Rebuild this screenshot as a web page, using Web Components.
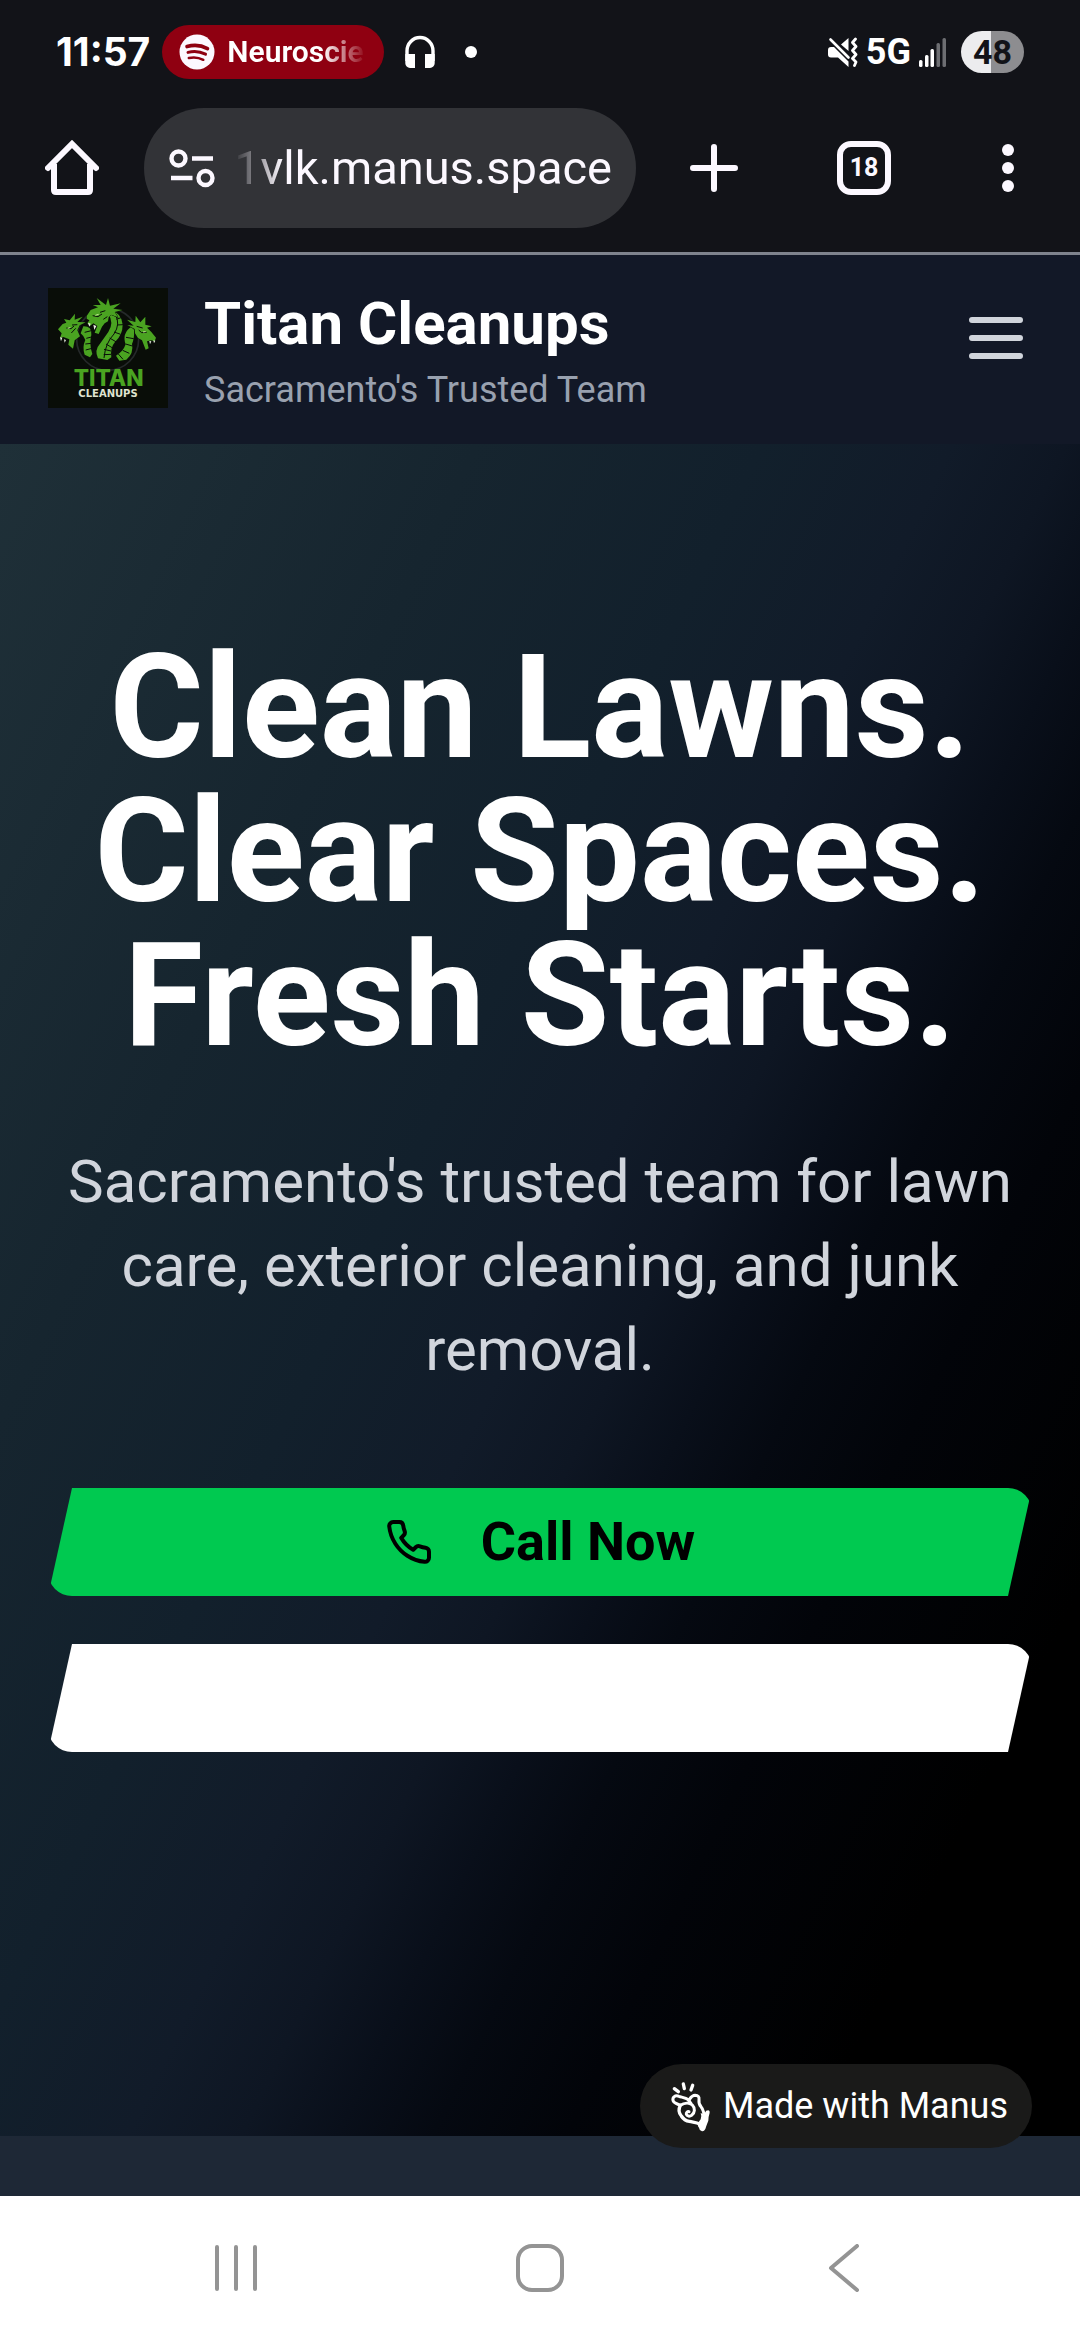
<!DOCTYPE html>
<html lang="en">
<head>
<meta charset="utf-8">
<meta name="viewport" content="width=device-width, initial-scale=1">
<title>Titan Cleanups</title>
<style>
  html, body { margin: 0; background: #fff; }
  body { font-family: Roboto, "Liberation Sans", sans-serif; }
</style>
</head>
<body>
<phone-screen>
  <status-bar slot="top"></status-bar>
  <browser-toolbar slot="top" address="1vlk.manus.space" tabs="18"></browser-toolbar>
  <site-header heading="Titan Cleanups" tagline="Sacramento's Trusted Team"></site-header>
  <hero-section>
    <span slot="title">Clean Lawns. Clear Spaces. Fresh Starts.</span>
    <span slot="lead">Sacramento's trusted team for lawn care, exterior cleaning, and junk removal.</span>
    <slant-button slot="actions" tone="green" icon="phone">Call Now</slant-button>
    <slant-button slot="actions" tone="white"></slant-button>
  </hero-section>
  <next-section></next-section>
  <made-with slot="badge">Made with Manus</made-with>
  <nav-bar slot="bottom"></nav-bar>
</phone-screen>

<script>
const define = (name, html) => {
  const tpl = document.createElement('template');
  customElements.define(name, class extends HTMLElement {
    constructor() {
      super();
      tpl.innerHTML = html(this);
      this.attachShadow({ mode: 'open' }).append(tpl.content.cloneNode(true));
    }
  });
};
const reset = `
  :host, *, *::before, *::after { box-sizing: border-box; }
  button { border: 0; padding: 0; margin: 0; background: none; color: inherit; font: inherit; display: flex; align-items: center; justify-content: center; }
  svg { display: block; flex: none; }
`;

define('phone-screen', () => `
<style>${reset}
  :host { display: flex; flex-direction: column; min-height: 100vh; background: #fff; }
  .page { position: relative; flex: 1; display: flex; flex-direction: column; }
  .badge { position: absolute; right: 48px; bottom: 48px; }
</style>
<slot name="top"></slot>
<div class="page"><slot></slot><div class="badge"><slot name="badge"></slot></div></div>
<slot name="bottom"></slot>`);

define('status-bar', () => `
<style>${reset}
  :host { display: flex; align-items: center; height: 104px; padding: 0 56px; background: #121318; color: #fff; }
  .left, .right { display: flex; align-items: center; }
  .right { margin-left: auto; gap: 8px; }
  time { font: 700 39px/48px Inter, sans-serif; }
  .chip { display: flex; align-items: center; gap: 12px; width: 222px; height: 54px; margin-left: 12px; padding: 0 12px 0 17px; border-radius: 27px; background: #8f0011; }
  .chip span { flex: 1; white-space: nowrap; font-size: 30px; line-height: 40px; font-weight: 600;
    -webkit-mask-image: linear-gradient(90deg, #000 66%, transparent 96%); mask-image: linear-gradient(90deg, #000 66%, transparent 96%); }
  .phones { margin-left: 20px; }
  .dot { width: 12px; height: 12px; margin-left: 29px; border-radius: 50%; background: #fff; }
  .net { font-size: 36px; line-height: 44px; font-weight: 700; }
  .sig { margin-right: 6px; }
  .batt { width: 63px; height: 42px; border-radius: 21px; background: linear-gradient(90deg, #ececee 0 30px, #8d8d90 30px); color: #121318; font-size: 34px; line-height: 42px; font-weight: 700; text-align: center; }
</style>
<div class="left">
  <time>11:57</time>
  <div class="chip">
    <svg width="36" height="36" viewBox="0 0 36 36"><circle cx="18" cy="18" r="17.5" fill="#fcf8ff"/><g fill="none" stroke="#8f0011" stroke-linecap="round"><path d="M8 12.6c7-2 14.500-1.200 20.500 2" stroke-width="3.600"/><path d="M9 18.400c6-1.600 12-1 17.500 1.800" stroke-width="3"/><path d="M9.800 24c5-1.200 10-.6 14.500 1.800" stroke-width="2.500"/></g></svg>
    <span>Neuroscie</span>
  </div>
  <svg class="phones" width="32" height="34" viewBox="0 0 32 34"><path d="M3 26V16a13 13.500 0 0 1 26 0v10" fill="none" stroke="#fff" stroke-width="3.400"/><path d="M1.300 19H11v14H6a4.700 4.700 0 0 1-4.700-4.700zM30.700 19H21v14h5a4.700 4.700 0 0 0 4.700-4.700z" fill="#fff"/></svg>
  <div class="dot"></div>
</div>
<div class="right">
  <svg width="30" height="30" viewBox="0 0 30 30"><path d="M3 10h3l14.500 14.500V30L10 20.500H3q-3 0-3-3V13q0-3 3-3zM20.500 1v13L13 7.500z" fill="#fff"/><path d="M2.500 2.500l18 18" stroke="#fff" stroke-width="2.600" stroke-linecap="round"/><path d="M27.500 2l-3 3.500 3.500 4-3.500 4 3.500 4-3.500 4 3.500 3.500-1.500 3.500" fill="none" stroke="#fff" stroke-width="2.800" stroke-linecap="round" stroke-linejoin="round"/></svg>
  <span class="net">5G</span>
  <svg class="sig" width="28" height="30" viewBox="0 0 28 30"><g fill="#fff"><rect x="0" y="23" width="3.500" height="7" rx="1.500"/><rect x="6" y="18" width="3.500" height="12" rx="1.500"/><rect x="11.500" y="12" width="3.500" height="18" rx="1.500"/></g><g fill="#6d6e72"><rect x="17.500" y="6" width="3.500" height="24" rx="1.500"/><rect x="23.500" y="1" width="3.500" height="29" rx="1.500"/></g></svg>
  <span class="batt">48</span>
</div>`);

define('browser-toolbar', el => `
<style>${reset}
  :host { display: flex; align-items: center; height: 148px; padding: 0 36px 20px; background: #121318; color: #fcf8ff; }
  button { width: 72px; height: 120px; flex: none; }
  .box { flex: 1; min-width: 0; display: flex; align-items: center; gap: 19px; height: 120px; margin-left: 36px; padding: 0 24px 0 25px; border-radius: 60px; background: #323337; }
  .box button { width: 46px; }
  input { flex: 1; min-width: 0; height: 72px; border: 0; padding: 0; background: none; color: inherit; font: 400 47px/72px Roboto, sans-serif; text-align: right; outline: 0;
    -webkit-mask-image: linear-gradient(90deg, transparent 0, #000 48px); mask-image: linear-gradient(90deg, transparent 0, #000 48px); }
  .plus { margin-left: 42px; } .tabs { margin-left: 78px; } .more { margin-left: 72px; }
  .tabs span { width: 54px; height: 54px; border: 6px solid; border-radius: 14px; font: 700 25px/42px Roboto, sans-serif; }
</style>
<button aria-label="Home"><svg width="54" height="56" viewBox="0 0 54 56"><path d="M3 28L27 4l24 24" fill="none" stroke="currentColor" stroke-width="6" stroke-linecap="round"/><path d="M9 24v26q0 2 2 2h32q2 0 2-2V24" fill="none" stroke="currentColor" stroke-width="6"/></svg></button>
<div class="box">
  <button aria-label="Site settings"><svg width="46" height="40" viewBox="0 0 46 40"><g fill="none" stroke="currentColor"><circle cx="9.500" cy="10.500" r="7" stroke-width="4.400"/><circle cx="36.500" cy="30" r="7" stroke-width="4.400"/><path d="M23 10.500h21M2 30h21.500" stroke-width="4.600"/></g></svg></button>
  <input type="text" aria-label="Address" value="${el.getAttribute('address')}">
</div>
<button class="plus" aria-label="New tab"><svg width="48" height="48" viewBox="0 0 48 48"><path d="M24 3v42M3 24h42" stroke="currentColor" stroke-width="6" stroke-linecap="round"/></svg></button>
<button class="tabs" aria-label="Open tabs"><span>${el.getAttribute('tabs')}</span></button>
<button class="more" aria-label="Menu"><svg width="12" height="48" viewBox="0 0 12 48" fill="currentColor"><circle cx="6" cy="6" r="6"/><circle cx="6" cy="24" r="6"/><circle cx="6" cy="42" r="6"/></svg></button>`);

define('titan-logo', () => `
<style>:host { display: block; width: 120px; height: 120px; } svg { display: block; width: 100%; height: 100%; }</style>
<svg viewBox="24 24 360 360">
  <rect x="24" y="24" width="360" height="360" fill="#090d08"/>
  <circle cx="203" cy="178" r="93" fill="none" stroke="#25292a" stroke-width="5"/>
  <g fill="#4aa321">
    <path d="M212 90q34 10 36 44 0 30-23 52-15 17-11 46l-12 8-28-5q-12-24 7-45l24-34q18-28 0-54z"/>
    <path d="M130 139q26-1 24 25-7 29 3 58l-7 10-16-8q-8-22 2-44-6-14-14-20z"/>
    <path d="M274 140q-29 20-17 53-7 21-29 34l10 15 21-3q23-19 17-47 8-20 6-43z"/>
  </g>
  <g fill="none" stroke="#090d08" stroke-width="3">
    <path d="M226 104q16 28-4 58-26 27-30 72"/>
    <path d="M229 118l17-6M231 135l18-1M222 156l20 7M209 174l20 12M198 192l20 12M192 208l21 5M191 224l22-1"/>
    <path d="M134 157l20-5M139 175l15-4M136 192l18-2M137 210l19-5M258 172l23 4M257 192l20 6M248 211l20 9M235 222l14 16"/>
  </g>
  <g fill="#4aa321" stroke="#090d08" stroke-width="3" paint-order="stroke">
    <path d="M140 108L152 90 174 82 158 75 182 75 170 54 198 75 204 54 210 77 242 70 220 86 248 90 224 96 234 112 214 104 206 112 204 124 194 130 186 140 176 162 164 158 172 138 160 130 150 138 142 130 148 121 140 116z"/>
    <path d="M54 148L68 132 79 128 72 117 89 121 105 101 104 119 128 110 112 126 137 127 119 136 112 151 120 169 104 181 99 206 85 194 88 178 70 171 60 174 65 160z"/>
    <path d="M348 173L334 156 321 143 335 139 316 134 316 110 301 127 287 107 286 126 261 119 281 137 262 135 284 147 285 160 294 174 306 181 317 209 326 205 321 184 334 181 344 184z"/>
  </g>
  <path d="M158 107l16 3 12-8M196 92l-16 5M79 144l14 2 9-8M320 157l-15 1-9-8M94 159l13-14M112 134l-16 1M290 139l18 5M190 118l12-8" fill="none" stroke="#090d08" stroke-width="3"/>
  <path d="M166 106l10-3M83 145l8-2M309 156l8-1" stroke="#c4ec98" stroke-width="3"/>
  <path d="M144 128l4 12 4-9zM160 134l3 16 6-12zM60 172l3 12 4-11zM72 178l2 10 4-8zM328 183l2 10 4-9zM340 181l2 9 4-8z" fill="#e8eee0"/>
  <text x="206" y="319" text-anchor="middle" font-family="Inter, sans-serif" font-weight="800" font-size="68" fill="#4aa321">TITAN</text>
  <text x="204" y="351" text-anchor="middle" font-family="DejaVu Sans, sans-serif" font-weight="700" font-size="30" fill="#dfe3d0">CLEANUPS</text>
</svg>`);

define('site-header', el => `
<style>${reset}
  :host { display: flex; align-items: center; gap: 36px; height: 192px; padding: 0 48px; background: #121827; box-shadow: inset 0 3px #7f838d; }
  .brand { flex: 1; }
  h2 { margin: 0; color: #fff; font-size: 60px; line-height: 84px; font-weight: 700; }
  p { margin: 0; color: #99a1af; font-size: 36px; line-height: 48px; }
  button { width: 72px; padding-bottom: 20px; color: #d1d5dc; }
</style>
<titan-logo></titan-logo>
<div class="brand"><h2>${el.getAttribute('heading')}</h2><p>${el.getAttribute('tagline')}</p></div>
<button aria-label="Open menu"><svg width="72" height="72" viewBox="0 0 24 24"><path d="M4 6h16M4 12h16M4 18h16" stroke="currentColor" stroke-width="2" stroke-linecap="round"/></svg></button>`);

define('hero-section', () => `
<style>${reset}
  :host { display: block; padding: 192px 48px 384px; text-align: center;
    background: linear-gradient(116deg, #1f3038 0%, #16252f 25%, #12202c 40%, #111b29 50%, #0e1623 56%, #090f1a 61%, #050911 66%, #020409 73%, #000 86%); }
  h1 { margin: 0 0 72px; color: #fff; font-size: 144px; line-height: 144px; font-weight: 700; }
  p { margin: 0 0 96px; color: #d1d5dc; font-size: 60px; line-height: 84px; }
  .actions { display: flex; flex-direction: column; gap: 48px; }
</style>
<h1><slot name="title"></slot></h1>
<p><slot name="lead"></slot></p>
<div class="actions"><slot name="actions"></slot></div>`);

define('slant-button', el => `
<style>${reset}
  :host { display: block; }
  button { width: 100%; height: 108px; gap: 48px; border-radius: 24px; color: #000; font-size: 54px; line-height: 84px; font-weight: 700;
    clip-path: polygon(24px 0, 100% 0, calc(100% - 24px) 100%, 0 100%); }
  :host([tone="green"]) button { background: #00c950; }
  :host([tone="white"]) button { background: #fff; color: #fff; }
</style>
<button type="button">${el.getAttribute('icon') === 'phone' ? `<svg width="48" height="48" viewBox="0 0 24 24" fill="none" stroke="currentColor" stroke-width="2" stroke-linecap="round" stroke-linejoin="round"><path d="M22 16.920v3a2 2 0 0 1-2.180 2 19.790 19.790 0 0 1-8.630-3.070 19.500 19.500 0 0 1-6-6 19.790 19.790 0 0 1-3.070-8.670A2 2 0 0 1 4.110 2h3a2 2 0 0 1 2 1.720 12.840 12.840 0 0 0 .7 2.810 2 2 0 0 1-.45 2.110L8.090 9.910a16 16 0 0 0 6 6l1.270-1.270a2 2 0 0 1 2.110-.45 12.840 12.840 0 0 0 2.810.7A2 2 0 0 1 22 16.920z"/></svg>` : ''}<slot></slot></button>`);

define('next-section', () => `<style>:host { display: block; flex: 1; min-height: 60px; background: #1e2836; }</style>`);

define('made-with', () => `
<style>${reset}
  a { display: flex; align-items: center; gap: 8px; height: 84px; padding: 0 24px 0 27px; border-radius: 42px; background: #1a1a19; color: #fff; font-size: 36px; line-height: 48px; text-decoration: none; white-space: nowrap; }
</style>
<a href="#"><svg width="48" height="56" viewBox="18 21 144 168"><g fill="none" stroke="#fff" stroke-linecap="round" stroke-linejoin="round"><path d="M40 53l12 9M67 39l3 14M95 43l-5 14" stroke-width="10"/><path d="M84 87C72 79 62 79 54 76 42 71 34 79 36 88c1 8 11 10 20 14" stroke-width="9"/><path d="M84 87c5-7 9-14 18-14 10 1 13 5 12 12-1 9-1 15 6 22 8 9 6 15 9 21" stroke-width="9"/><path d="M82 87l8 10" stroke-width="9"/><path d="M58 103c-6 12-4 24 3 32 5 8 13 15 24 16 13 3 22 3 31 8" stroke-width="10"/><path d="M58 103c12-8 27-9 36-1 9 9 8 24-2 31-6 4-14 3-16-3-1-5 3-9 8-8" stroke-width="9"/></g><path d="M119 126q7 4 13-1 2-7 10-7 5 1 4 7-4 12-4 24-5 12-9 25-4 8-10 7-8-2-9-11-5-6-3-12 2-6 8-13 4-9 0-19z" fill="#fff"/></svg><slot></slot></a>`);

define('nav-bar', () => `
<style>${reset}
  :host { display: flex; align-items: center; justify-content: center; height: 144px; background: #fff; color: #949494; }
  nav { display: flex; justify-content: space-between; width: 63%; }
  button { width: 72px; height: 96px; }
</style>
<nav>
  <button aria-label="Recent apps"><svg width="44" height="48" viewBox="0 0 44 48"><path d="M3 3v42M22 3v42M41 3v42" stroke="currentColor" stroke-width="4" stroke-linecap="round"/></svg></button>
  <button aria-label="Home"><svg width="48" height="48" viewBox="0 0 48 48"><rect x="2" y="2" width="44" height="44" rx="14" fill="none" stroke="currentColor" stroke-width="4"/></svg></button>
  <button aria-label="Back"><svg width="32" height="48" viewBox="0 0 32 48"><path d="M29 2L3 24l26 22" fill="none" stroke="currentColor" stroke-width="4" stroke-linecap="round" stroke-linejoin="round"/></svg></button>
</nav>`);
</script>
</body>
</html>
